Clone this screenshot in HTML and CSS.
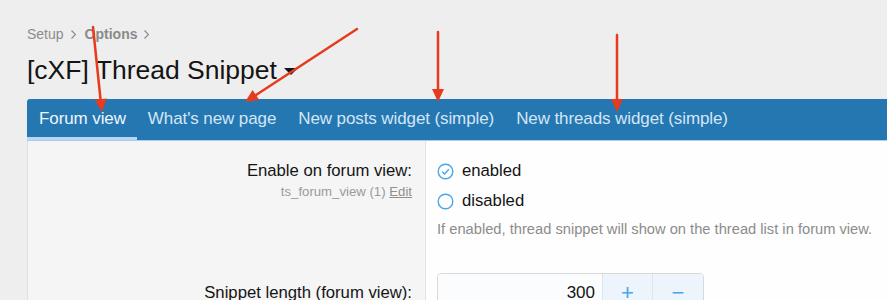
FILE: index.html
```html
<!DOCTYPE html>
<html lang="en">
<head>
  <meta charset="UTF-8">
  <title>[cXF] Thread Snippet - Options</title>
  <link rel="stylesheet" href="styles.css">
</head>
<body>
  <div class="page">
    <!-- Breadcrumb -->
    <div class="breadcrumb">
      <span>Setup</span>
      <svg class="chevron" width="5" height="9" viewBox="0 0 5 9"><path d="M0.5 0.5 L4.5 4.5 L0.5 8.5" fill="none" stroke="#8c8c8c" stroke-width="1.2"/></svg>
      <b>Options</b>
      <svg class="chevron" width="5" height="9" viewBox="0 0 5 9"><path d="M0.5 0.5 L4.5 4.5 L0.5 8.5" fill="none" stroke="#8c8c8c" stroke-width="1.2"/></svg>
    </div>

    <h1 class="title">[cXF] Thread Snippet<span class="caret"></span></h1>

    <!-- Tabs -->
    <div class="tabs">
      <span class="tab active">Forum view</span>
      <span class="tab">What's new page</span>
      <span class="tab">New posts widget (simple)</span>
      <span class="tab">New threads widget (simple)</span>
    </div>

    <!-- Option rows -->
    <div class="form-row first">
      <div class="label-col">
        <div class="label">Enable on forum view:</div>
        <div class="label-hint">ts_forum_view (1) <u>Edit</u></div>
      </div>
      <div class="input-col">
        <div class="radio">
          <svg width="17" height="17" viewBox="0 0 17 17"><circle cx="8.5" cy="8.5" r="7.3" fill="none" stroke="#47a7eb" stroke-width="1.4"/><path d="M5.2 8.7 L7.6 11 L11.9 6.3" fill="none" stroke="#47a7eb" stroke-width="1.4"/></svg>
          <span>enabled</span>
        </div>
        <div class="radio">
          <svg width="17" height="17" viewBox="0 0 17 17"><circle cx="8.5" cy="8.5" r="7.3" fill="none" stroke="#47a7eb" stroke-width="1.4"/></svg>
          <span>disabled</span>
        </div>
        <div class="explain">If enabled, thread snippet will show on the thread list in forum view.</div>
      </div>
    </div>

    <div class="form-row">
      <div class="label-col">
        <div class="label">Snippet length (forum view):</div>
      </div>
      <div class="input-col">
        <div class="number-box">
          <div class="number-value">300</div>
          <div class="number-btn">+</div>
          <div class="number-btn minus">&minus;</div>
        </div>
      </div>
    </div>
  </div>

  <!-- Annotation arrows -->
  <svg class="arrows" width="887" height="300" viewBox="0 0 887 300">
    <g stroke="#e63b1e" stroke-width="2.5" stroke-linecap="round">
      <line x1="93" y1="27" x2="100.6" y2="100"/>
      <line x1="357" y1="29" x2="256" y2="95"/>
      <line x1="438" y1="32" x2="438" y2="90"/>
      <line x1="617" y1="35" x2="617" y2="100"/>
    </g>
    <g fill="#e63b1e">
      <polygon points="102,112 106.6,98.5 94.6,99.7"/>
      <polygon points="245,102 259.2,99.9 252.6,89.9"/>
      <polygon points="438,102 432,89 444,89"/>
      <polygon points="617,112 611,99 623,99"/>
    </g>
  </svg>
</body>
</html>
```

FILE: styles.css
```css
body {
  margin: 0;
  background: #eeeeee;
  font-family: 'Liberation Sans', Arial, sans-serif;
  color: #141414;
  overflow: hidden;
}

.page {
  padding-left: 27px;
}

/* Breadcrumb */
.breadcrumb {
  padding-top: 25px;
  height: 18px;
  line-height: 18px;
  font-size: 14px;
  color: #8c8c8c;
  display: flex;
  align-items: center;
}
.breadcrumb b {
  color: #8a8a8a;
}
.chevron {
  margin: 0 9px 0 7px;
}

/* Title */
.title {
  margin: 11px 0 0;
  font-size: 26.5px;
  font-weight: normal;
  line-height: 32px;
  height: 32px;
  display: flex;
  align-items: center;
}
.caret {
  margin-left: 7px;
  margin-top: 2px;
  border-left: 7px solid transparent;
  border-right: 7px solid transparent;
  border-top: 7px solid #141414;
}

/* Tabs */
.tabs {
  margin-top: 13px;
  background: #2577b1;
  border-radius: 3px 0 0 0;
  border-bottom: 1px solid #a9cdeb;
  display: flex;
}
.tab {
  padding: 2px 11px 0;
  line-height: 36px;
  border-bottom: 3px solid transparent;
  font-size: 17px;
  letter-spacing: -0.1px;
  color: #d3e6f6;
  white-space: nowrap;
}
.tab.active {
  padding-left: 12px;
  color: #eef6fc;
  border-bottom-color: #b5d7f2;
}

/* Form rows */
.form-row {
  display: grid;
  grid-template-columns: 397px 1fr;
  border-left: 1px solid #dedede;
}
.label-col {
  background: #f5f5f5;
  text-align: right;
  padding-right: 13px;
}
.input-col {
  background: #fefefe;
  border-left: 1px solid #e3e3e3;
  padding-left: 11px;
}
.form-row.first .label-col {
  padding-top: 20px;
}
.form-row.first .input-col {
  padding-top: 15px;
  padding-bottom: 12px;
}
.label {
  font-size: 16.7px;
  line-height: 20px;
}
.label-hint {
  margin-top: 3px;
  font-size: 13.2px;
  line-height: 16px;
  color: #9a9a9a;
}
.label-hint u {
  color: #8f8f8f;
}

.radio {
  display: flex;
  align-items: center;
  height: 30px;
  font-size: 16.7px;
}
.radio svg {
  margin-right: 8px;
}
.explain {
  margin-top: 4px;
  font-size: 14.7px;
  line-height: 18px;
  color: #8c8c8c;
  white-space: nowrap;
}

.form-row:not(.first) .label-col {
  padding-top: 33px;
}
.form-row:not(.first) .input-col {
  padding-top: 23px;
}

.number-box {
  display: flex;
  width: 265px;
  height: 36px;
  border: 1px solid #d8d8d8;
  border-radius: 4px;
  overflow: hidden;
}
.number-value {
  flex: 1;
  background: #fbfcfd;
  text-align: right;
  padding-right: 7px;
  font-size: 17px;
  line-height: 38px;
}
.number-btn {
  width: 49px;
  background: #edf4fb;
  border-left: 1px solid #dde5ee;
  color: #47a7eb;
  text-align: center;
  font-size: 22px;
  line-height: 38px;
}
.number-btn.minus {
  width: 50px;
}

/* Annotation overlay */
.arrows {
  position: absolute;
  top: 0;
  left: 0;
  pointer-events: none;
}
```
